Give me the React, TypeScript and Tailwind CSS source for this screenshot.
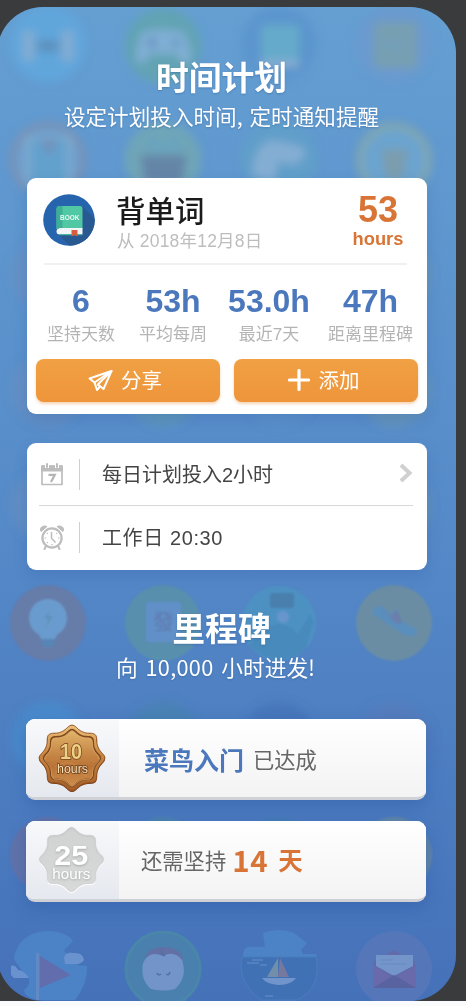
import React from "react";

const CJK = "font-['Noto_Sans_CJK_SC',sans-serif]";
const MIX = "font-['Liberation_Sans','Noto_Sans_CJK_SC',sans-serif]";

function sealPath(cx: number, cy: number, base: number, wave: number) {
  const pts: string[] = [];
  for (let i = 0; i < 180; i++) {
    const t = (i / 180) * Math.PI * 2;
    const r = base + wave * Math.cos(8 * t) + wave * 0.16 * Math.cos(16 * t);
    pts.push(`${(cx + r * Math.cos(t)).toFixed(2)} ${(cy + r * Math.sin(t)).toFixed(2)}`);
  }
  return `M${pts.join("L")}Z`;
}

function Backdrop() {
  const xs = [48, 163, 279, 394];
  return (
    <svg className="absolute top-0 left-[3px]" width="456" height="994" viewBox="0 7 456 994">
      <defs>
        <filter id="far" x="-20%" y="-20%" width="140%" height="140%"><feGaussianBlur stdDeviation="4" /></filter>
        <filter id="mid" x="-20%" y="-20%" width="140%" height="140%"><feGaussianBlur stdDeviation="1.3" /></filter>
        <filter id="near" x="-20%" y="-20%" width="140%" height="140%"><feGaussianBlur stdDeviation="0.6" /></filter>
      </defs>
      <g filter="url(#far)">
        <circle cx="48" cy="44" r="38" fill="#61a6db" />
        <rect x="22" y="30" width="13" height="32" rx="5" fill="#80acd3" />
        <rect x="61" y="30" width="13" height="32" rx="5" fill="#80acd3" />
        <rect x="37" y="41" width="22" height="10" fill="#5b8eb9" />
        <circle cx="163" cy="46" r="38" fill="#62a3b4" />
        <path d="M142 32Q163 27 184 32Q196 60 187 64Q181 64 176 54H150Q145 64 139 64Q132 58 142 32Z" fill="#80afd4" />
        <circle cx="152" cy="43" r="5" fill="#6692c0" />
        <circle cx="176" cy="43" r="5" fill="#6c9dc6" />
        <circle cx="279" cy="44" r="38" fill="#5b95cd" />
        <rect x="261" y="25" width="38" height="36" fill="#65aacb" />
        <rect x="261" y="60" width="38" height="7" fill="#89add2" />
        <circle cx="394" cy="44" r="38" fill="#6a9acf" />
        <rect x="374" y="22" width="43" height="46" fill="#779fb2" />
        <path d="M384 39Q394 58 406 39" stroke="#6ea0c0" strokeWidth="4" fill="none" />

        <circle cx="48" cy="160" r="35" fill="#699fce" stroke="#7c91b2" strokeWidth="6" />
        <rect x="25" y="136" width="47" height="50" fill="#82accf" />
        <rect x="30" y="139" width="37" height="50" fill="#63a1cd" />
        <path d="M40 139h18l-9 18z" fill="#7190b9" />
        <circle cx="163" cy="160" r="38" fill="#6fa5b7" />
        <path d="M145 152L149 133L163 144L177 133L183 152Z" fill="#69a4bd" />
        <path d="M140 155h47l-5 28h-37z" fill="#6585a7" />
        <circle cx="279" cy="160" r="38" fill="#609fc9" />
        <path d="M252 176Q254 144 272 140L300 146Q313 154 294 165L278 162L275 181Z" fill="#84add3" />
        <circle cx="394" cy="160" r="34" fill="#6ba4d0" stroke="#7fa6b2" strokeWidth="8" />
        <path d="M381 149h27l-5 31h-17z" fill="#7b9dae" />
        {[275, 390, 506].map((cy) => xs.map((cx, i) => (
          <circle key={`${cx}-${cy}`} cx={cx} cy={cy} r="37" fill={["#6b8fc0", "#619eb0", "#5b94ca", "#719aad"][i]} opacity=".55" />
        )))}
        <circle cx="48" cy="739" r="37" fill="#4989cb" />
        <circle cx="163" cy="739" r="37" fill="#4982b4" />
        <circle cx="279" cy="739" r="37" fill="#4777ba" />
        <circle cx="394" cy="739" r="37" fill="#557dbd" />
      </g>
      <g filter="url(#mid)">
        <circle cx="48" cy="623" r="38" fill="#667ba9" />
        <circle cx="48" cy="618" r="19" fill="#6b9bce" />
        <path d="M34 629Q40 634 41 640H55Q56 634 62 629Z" fill="#6b9bce" />
        <path d="M41 639h14l-2 8H43z" fill="#5785b6" />
        <path d="M50 609l-6 10h4l-2 9 7-12h-5z" fill="#6192bd" />
        <circle cx="163" cy="623" r="38" fill="#588fad" />
        <rect x="146" y="602" width="35" height="40" rx="3" fill="#6190c7" />
        <text x="153" y="629" fontSize="21" fill="#6078b0" className="font-['Noto_Sans_CJK_TC',sans-serif]">發</text>
        <circle cx="279" cy="623" r="37" fill="#4e91c3" />
        <rect x="270" y="593" width="24" height="15" rx="2" fill="#497fad" />
        <circle cx="283" cy="617" r="6" fill="#6796cc" />
        <path d="M250 645L260 631L278 623L292 628L298 634L310 614L313 622L306 648Q279 672 250 645Z" fill="#468abb" />
        <circle cx="394" cy="623" r="38" fill="#6b8da4" />
        <path d="M373 608L381 606L391 614L397 609L402 621L417 630L416 636L404 635L373 614Z" fill="#5a8ebc" />
        <path d="M381 608L397 624L402 622L397 610L391 616Z" fill="#6c7eaa" />
        <circle cx="48" cy="855" r="38" fill="#6272a9" />
        <circle cx="163" cy="855" r="38" fill="#4e83af" />
        <circle cx="279" cy="855" r="38" fill="#477bb7" />
        <circle cx="394" cy="855" r="38" fill="#6487a6" />
      </g>
      <g filter="url(#near)">
        <path d="M14 959C17 939 32 931 49 931C58 931 68 934 73 941Q69 946 64 950Q67 953 66 958Q72 966 87 966Q88 983 75 1000H40Q25 998 24 990Q32 984 28 976Q21 971 14 959Z" fill="#4b83c6" />
        <path d="M64 958Q65 952 73 953Q83 952 84 960Q81 965 73 964H65Z M11 975V966Q15 964 18 970Q24 970 29 978H14Z" fill="#6a92ce" />
        <path d="M36 953h3v47h-3z" fill="#6489c4" /><path d="M40 956L71 975L40 988Z" fill="#626dae" />
        <circle cx="163" cy="969" r="37" fill="#4980ae" stroke="#4886aa" strokeWidth="3" />
        <path d="M145 957Q149 947 164 947Q181 948 183 960Z" fill="#6370a6" />
        <path d="M163 956Q174 950 182 960Q188 977 175 989Q164 992 151 989Q140 980 143 963Q149 950 163 956Z" fill="#7294c8" />
        <path d="M162 948Q160 954 165 956M157 973q1 3 4 1M166 974q3 2 4-2" fill="none" stroke="#526fa0" strokeWidth="1.5" />
        <path d="M243 957Q243 948 248 947H265L263 933Q278 927 294 933L307 943L301 950L303 954H316Q318 956 315 959H243Z" fill="#4b83c6" />
        <path d="M242 957H316Q322 988 297 1000H261Q237 982 242 957Z" fill="#4071b5" stroke="#4b7cbf" strokeWidth="1" />
        <path d="M278 958L267 977H278Z" fill="#718fa9" /><path d="M280 958L289 977H278Z" fill="#76789e" />
        <path d="M262 978H296Q291 985 279 985Q266 984 262 978Z" fill="#7195cb" />
        <path d="M252 960h11M247 963h12M260 965h7M265 996h8" stroke="#5b85c3" strokeWidth="1.3" />
        <circle cx="394" cy="969" r="38" fill="#5577ba" />
        <path d="M373 962L394 950L415 962V988H373Z" fill="#626cab" />
        <path d="M376 955H413V966L394 976L376 966Z" fill="#7395ca" />
        <path d="M373 965L394 978L416 965V988H373Z" fill="#676bab" /><path d="M373 988L394 975L416 988Z" fill="#5963a0" />
        <path d="M381 960h12M381 964h26" stroke="#668bc1" />
      </g>
    </svg>
  );
}

function BookIcon() {
  return (
    <svg width="52" height="52" viewBox="0 0 52 52" className="block">
      <defs><clipPath id="disc"><circle cx="26" cy="26" r="25.8" /></clipPath></defs>
      <circle cx="26" cy="26" r="25.8" fill="#2764ae" />
      <g clipPath="url(#disc)">
        <path d="M39 12L57 30V57H32L15 40Z" fill="#285991" />
        <path d="M13.500 15a3 3 0 0 1 3-3H37a2.500 2.500 0 0 1 2.500 2.500V35H13.500Z" fill="#51c8a4" />
        <path d="M13.500 15a3 3 0 0 1 3-3h3v23h-6Z" fill="#3daf96" />
        <path d="M16 34H39.500V40.500H16.500a3 3 0 0 1 0-6Z" fill="#f2f5f7" />
        <path d="M16 40H39v1.300H16.500Z" fill="#45b7a0" />
        <path d="M28.500 36H34.500V42.500L31.500 41L28.500 42.500Z" fill="#d75f40" />
        <text x="26.700" y="26" textAnchor="middle" fontSize="6.600" fontWeight="700" textLength="19.500" lengthAdjust="spacingAndGlyphs" fill="#e9faf4" className="font-['Liberation_Sans',sans-serif]">BOOK</text>
      </g>
    </svg>
  );
}

function Heading({ children }: { children: React.ReactNode }) {
  return <h2 className={`${CJK} h-10 whitespace-nowrap text-center text-[32.800px] leading-[39px] font-bold text-white [text-shadow:0_1px_2px_#285b9066]`}>{children}</h2>;
}

function Stat({ value, label, width }: { value: string; label: string; width: string }) {
  return (
    <div className={`flex flex-col items-center whitespace-nowrap ${width}`}>
      <div className="h-[34px] font-['Liberation_Sans',sans-serif] text-[32px] leading-[34px] font-bold text-[#4b78bc]">{value}</div>
      <div className={`${MIX} mt-[5px] h-6 text-[17px] leading-6 text-[#b4b4b4]`}>{label}</div>
    </div>
  );
}

function ActionButton({ label, children }: { label: string; children: React.ReactNode }) {
  return (
    <button className="flex h-[43px] w-[184px] items-center justify-center rounded-[8px] bg-[#ef983d] bg-linear-to-b from-[#f1a044] to-[#ee953b] pr-[6px] shadow-[0_2px_3px_#e9964566]">
      {children}
      <span className={`${CJK} -mt-1 text-[20.500px] leading-[30px] text-white`}>{label}</span>
    </button>
  );
}

function Calendar() {
  return (
    <svg width="24" height="25" viewBox="0 0 24 25" fill="none">
      <path d="M2 4H22V22.500H2Z" stroke="#bdbdbd" strokeWidth="1.700" strokeLinejoin="round" />
      <path d="M1.200 3.500H22.800V9.500H1.200Z" fill="#bdbdbd" />
      <path d="M7 1V6M17 1V6" stroke="#fff" strokeWidth="4" />
      <path d="M7 2V5M17 2V5" stroke="#bdbdbd" strokeWidth="2" strokeLinecap="round" />
      <path d="M8.500 12.800H14.800L11 20" stroke="#b5b5b5" strokeWidth="2.200" />
    </svg>
  );
}

function Alarm() {
  return (
    <svg width="26" height="27" viewBox="0 0 26 27" fill="none" stroke="#bdbdbd">
      <circle cx="13" cy="14" r="9.600" strokeWidth="2.200" />
      <path d="M7 22L5.500 25M19 22L20.500 25" strokeWidth="2" strokeLinecap="round" />
      <path d="M2 7.500C0 3.500 4 1 8 2.500Z M24 7.500C26 3.500 22 1 18 2.500Z" fill="#bdbdbd" strokeLinejoin="round" />
      <path d="M12.500 8V14.300L16.500 18.500" strokeWidth="1.500" />
      <path d="M19 14h1.500M5.500 14H7M13 20v1.500M8 9l.800.800M18 9l-.8.800M8 19l.8-.8" strokeWidth="1.200" />
    </svg>
  );
}

function Row({ icon, text, arrow, textClass }: { icon: React.ReactNode; text: string; arrow?: boolean; textClass: string }) {
  return (
    <div className="flex h-[62px] items-center">
      <div className="-ml-px flex w-[28px] justify-center">{icon}</div>
      <div className="ml-[13px] h-[31px] w-px bg-[#cfcfcf]" />
      <div className={`${MIX} ml-[22px] w-[190px] pt-[2px] leading-[30px] whitespace-nowrap text-[#444] ${textClass}`}>{text}</div>
      {arrow && <svg className="mb-[2px] ml-auto" width="14" height="20" viewBox="0 0 14 20"><path d="M2 2L10.500 10L2 18" fill="none" stroke="#d0d0d0" strokeWidth="4" /></svg>}
    </div>
  );
}

function BronzeSeal() {
  return (
    <svg width="68" height="69" viewBox="0 0 68 69">
      <defs>
        <linearGradient id="bronze" x2="0" y2="1"><stop stopColor="#edc178" /><stop offset=".45" stopColor="#c88742" /><stop offset="1" stopColor="#a45c25" /></linearGradient>
        <linearGradient id="bronzeFace" x2="0" y2="1"><stop stopColor="#e2b66b" /><stop offset=".4" stopColor="#c88a49" /><stop offset=".65" stopColor="#b97336" /><stop offset="1" stopColor="#cd8e4d" /></linearGradient>
      </defs>
      <path d={sealPath(34, 35, 30.4, 2.3)} fill="#7c431e" />
      <path d={sealPath(34, 34, 30.2, 2.3)} fill="url(#bronze)" stroke="#925222" strokeWidth="1" />
      <path d={sealPath(34, 34, 26, 2)} fill="url(#bronzeFace)" stroke="#7e4820" strokeWidth="1.600" />
      <path d={sealPath(34, 34.8, 25, 1.9)} fill="none" stroke="#e1aa66" strokeWidth=".8" />
      <path d="M17 43Q29 35 40 42T53 47M17 48Q31 41 49 52" stroke="#d89758" strokeWidth="1" fill="none" opacity=".5" />
      <g textAnchor="middle" className="font-['Liberation_Sans',sans-serif]">
        <text x="33" y="34.500" fontSize="22.500" fontWeight="700" textLength="22" lengthAdjust="spacingAndGlyphs" fill="#efd084" stroke="#73431e" strokeWidth="1.600" paintOrder="stroke">10</text>
        <text x="34.500" y="49.300" fontSize="12.600" textLength="31" lengthAdjust="spacingAndGlyphs" fill="#f6e1b8" stroke="#70401d" strokeWidth="1.600" paintOrder="stroke">hours</text>
      </g>
    </svg>
  );
}

function SilverSeal() {
  return (
    <svg width="68" height="69" viewBox="0 0 68 69">
      <defs><linearGradient id="silver" x2="0" y2="1"><stop stopColor="#cbcbcb" /><stop offset="1" stopColor="#dadada" /></linearGradient></defs>
      <path d={sealPath(33.500, 34.800, 29.6, 2.4)} fill="#fff" />
      <path d={sealPath(33.500, 33.5, 29.4, 2.4)} fill="url(#silver)" stroke="#c2c4c7" strokeWidth=".6" />
      <path d={sealPath(33.500, 34, 27.8, 2.2)} fill="#d6d7d7" opacity=".6" />
      <g textAnchor="middle" fill="#fff" className="font-['Liberation_Sans',sans-serif] [filter:drop-shadow(0_1px_1px_#999b)]">
        <text x="33.300" y="38.500" fontSize="28" fontWeight="700" textLength="34" lengthAdjust="spacingAndGlyphs">25</text>
        <text x="33.300" y="52.500" fontSize="14" textLength="38" lengthAdjust="spacingAndGlyphs">hours</text>
      </g>
    </svg>
  );
}

function Milestone({ seal, children }: { seal: React.ReactNode; children: React.ReactNode }) {
  return (
    <div className="flex h-[81px] w-[400px] overflow-hidden rounded-[9px] border-b-[3px] border-[#d0d1d7] bg-white bg-linear-to-b from-white to-[#f3f3f3] shadow-[0_6px_16px_#28549f66]">
      <div className="flex w-[93px] items-center justify-center bg-linear-to-b from-[#f8f9fb] to-[#e5e8ee]"><div className="-ml-[2px]">{seal}</div></div>
      {children}
    </div>
  );
}

export default function App() {
  return (
    <main className="h-[1006px] w-[466px] overflow-hidden bg-[#fafbfc]">
      <div className="h-[1001px] bg-[#393b3d] pt-[7px]">
        <section className="relative -ml-[3px] h-[994px] w-[459px] overflow-hidden rounded-[46px] bg-linear-to-b from-[#659fd2] via-[#568bc9] to-[#4571b9]">
          <Backdrop />
          <div className="relative flex flex-col pt-[49px] pl-[30px]">
            <div className="w-[389px]">
              <Heading>时间计划</Heading>
              <p className={`${CJK} mt-[5px] text-center text-[21.600px] leading-[30px] [word-spacing:2px] whitespace-nowrap text-white [text-shadow:0_1px_2px_#285b9066]`}>设定计划投入时间, 定时通知提醒</p>
            </div>

            <article className="mt-[47px] h-[236px] w-[400px] rounded-[9px] bg-white shadow-[0_6px_14px_#28549f38]">
              <header className="mr-[20px] ml-[17px] flex h-[87px] border-b-2 border-[#f0f0f0] pt-4">
                <div className="-ml-px"><BookIcon /></div>
                <div className="ml-[21px] w-[234px] shrink-0 whitespace-nowrap">
                  <h1 className={`${CJK} -mt-[2px] text-[29.500px] leading-[34px] font-medium text-[#1b1b1b]`}>背单词</h1>
                  <p className={`${MIX} mt-[3px] ml-px text-[17.500px] leading-6 tracking-[0.2px] text-[#bdbdbd]`}>从 2018年12月8日</p>
                </div>
                <div className="flex w-[56px] shrink-0 flex-col items-center font-['Liberation_Sans',sans-serif] font-bold text-[#d87536]">
                  <span className="text-[36px] leading-[32px]">53</span>
                  <span className="mt-[2px] text-[18.300px] leading-[22px]">hours</span>
                </div>
              </header>
              <div className="flex pt-[19px] pl-2">
                <Stat value="6" label="坚持天数" width="w-[92px]" />
                <Stat value="53h" label="平均每周" width="w-[92px]" />
                <Stat value="53.0h" label="最近7天" width="w-[100px]" />
                <Stat value="47h" label="距离里程碑" width="w-[103px]" />
              </div>
              <div className="mt-3 flex gap-[14px] pl-[9px]">
                <ActionButton label="分享">
                  <svg width="25" height="24" viewBox="0 0 25 24" fill="none" stroke="#fff" strokeWidth="2" strokeLinejoin="round" className="mr-2">
                    <path d="M1.500 9.500L23.500 2L6.500 13.500Z" />
                    <path d="M23.500 2L15.500 20L9.800 15.500Z" />
                    <path d="M6.500 13.500L9 21L12 17.500L9.800 15.500" />
                  </svg>
                </ActionButton>
                <ActionButton label="添加">
                  <svg width="22" height="22" viewBox="0 0 22 22" className="mr-[9px] mb-[2px] ml-px"><path d="M11 1.500V20.500M1.500 11H20.500" stroke="#fff" strokeWidth="3.200" strokeLinecap="round" /></svg>
                </ActionButton>
              </div>
            </article>

            <article className="mt-[29px] h-[127px] w-[400px] rounded-[9px] bg-white pl-3 shadow-[0_6px_14px_#28549f38]">
              <div className="w-[374px] border-b border-[#d8d8d8]"><Row icon={<Calendar />} text="每日计划投入2小时" arrow textClass="text-[20px]" /></div>
              <div><Row icon={<Alarm />} text="工作日 20:30" textClass="text-[20px] tracking-[0.6px]" /></div>
            </article>

            <div className="mt-[37px] w-[389px]">
              <Heading>里程碑</Heading>
              <p className={`${CJK} mt-[6px] -ml-[12px] text-center text-[21.700px] leading-[28px] [word-spacing:3px] whitespace-nowrap text-white [text-shadow:0_1px_2px_#285b9066]`}>向 <span className="tracking-[0.3px]">10,000</span> 小时进发!</p>
            </div>
            <div className="mt-[38px] -ml-px flex flex-col gap-[21px]">
              <Milestone seal={<BronzeSeal />}>
                <div className={`${CJK} flex items-center pt-[2px] pl-[25px] whitespace-nowrap`}>
                  <span className="text-[25px] leading-[34px] font-bold text-[#4b78bc]">菜鸟入门</span>
                  <span className="ml-[9px] text-[21.300px] leading-[34px] text-[#666]">已达成</span>
                </div>
              </Milestone>
              <Milestone seal={<SilverSeal />}>
                <div className={`${CJK} flex items-center pl-[22px] whitespace-nowrap text-[#666]`}>
                  <span className="text-[21.300px] leading-[34px]">还需坚持</span>
                  <span className="ml-[6px] pb-[3px] text-[29.500px] leading-[34px] font-bold tracking-[0.6px] text-[#d87536]">14</span>
                  <span className="ml-[10px] pb-px text-[24.500px] leading-[34px] font-bold text-[#d87536]">天</span>
                </div>
              </Milestone>
            </div>
          </div>
        </section>
      </div>
    </main>
  );
}
